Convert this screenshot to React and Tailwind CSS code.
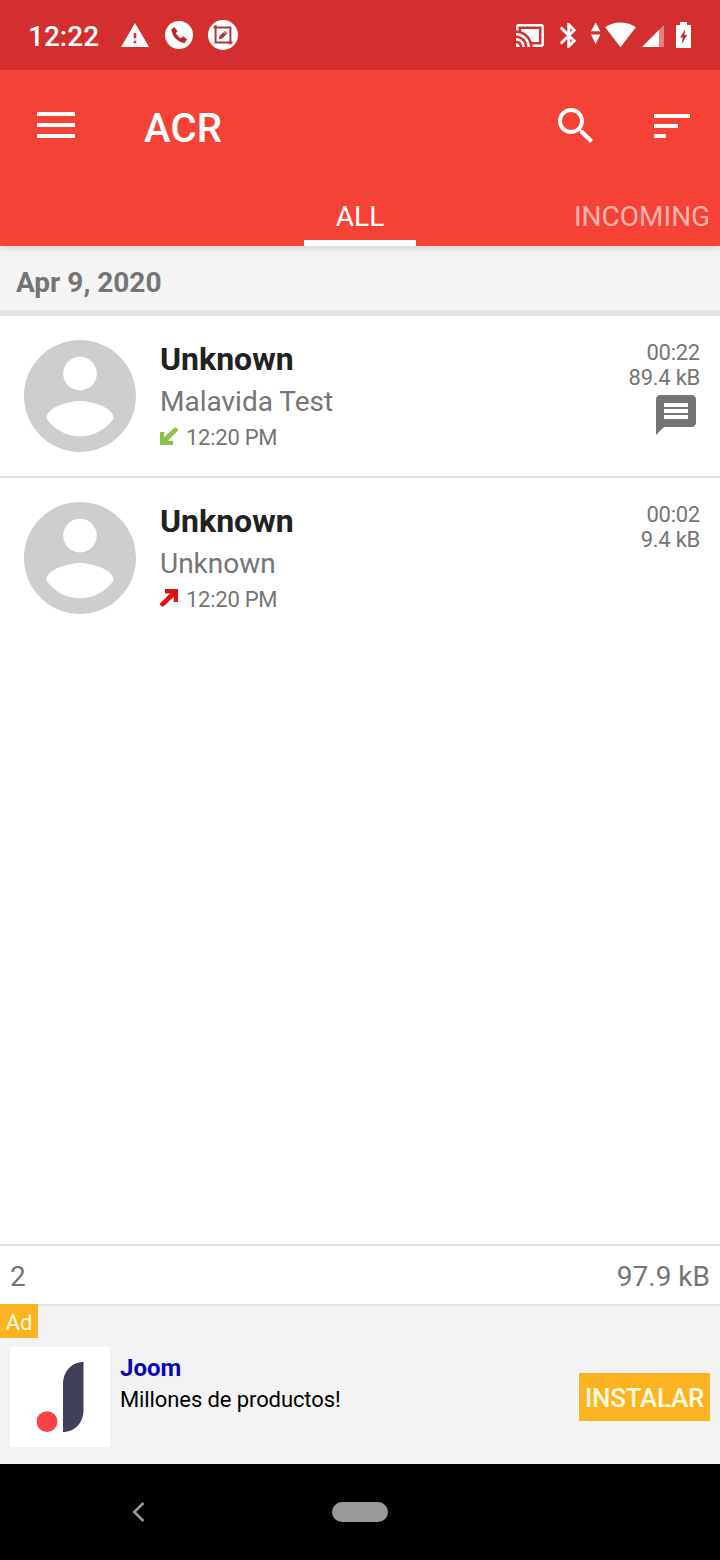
const CALLS = [
  {
    id: 1,
    name: 'Unknown',
    contact: 'Malavida Test',
    time: '12:20 PM',
    direction: 'in',
    duration: '00:22',
    size: '89.4 kB',
    hasNote: true,
  },
  {
    id: 2,
    name: 'Unknown',
    contact: 'Unknown',
    time: '12:20 PM',
    direction: 'out',
    duration: '00:02',
    size: '9.4 kB',
    hasNote: false,
  },
];

/**
 * System status bar: clock, notifications and connectivity icons.
 */
function StatusBar() {
  return (
    <div className="flex h-[70px] shrink-0 items-center bg-[#d32f2f] pl-7 pr-[29px] text-white">
      <span className="w-[93px] pt-1 text-[28px] font-medium leading-8">12:22</span>

      {/* Warning */}
      <svg className="h-6 w-7" viewBox="1 2 22 19" preserveAspectRatio="none" fill="currentColor">
        <path d="M1 21h22L12 2 1 21zm12-3h-2v-2h2v2zm0-4h-2v-4h2v4z" />
      </svg>

      {/* Call */}
      <svg className="ml-4 size-7" viewBox="0 0 28 28">
        <circle cx="14" cy="14" r="14" fill="#fff" />
        <path
          d="M8.300 7.800C8 13.500 13.500 20 20.300 20.300"
          fill="none"
          stroke="#b8282c"
          strokeWidth="3.400"
        />
        <path d="M6.200 9L9.200 6l3.400 4.300-2.700 2.600zM15.600 17.800l2.500-2.500 4.100 3.300-2.900 3.200z" fill="#b8282c" />
      </svg>

      {/* Screenshot edit */}
      <svg className="ml-[15px] size-[30px]" viewBox="0 0 30 30">
        <circle cx="15" cy="15" r="15" fill="#fff" />
        <path d="M5.500 7.600H22.400V24.500M7.600 5V22.400H24.500" fill="none" stroke="#a8383c" strokeWidth="2" />
        <path d="M10.800 19.200l.8-3.400 5.200-4.900 2.500 2.600-5.100 4.900z" fill="#a8383c" />
        <path d="M15.400 11.800l2.600 2.700" stroke="#fff" strokeWidth=".7" />
      </svg>

      <div className="flex-1" />

      {/* Cast */}
      <svg className="h-[23px] w-7" viewBox="1 3 22 18" preserveAspectRatio="none" fill="currentColor">
        <path d="M1 18v3h3c0-1.66-1.34-3-3-3zm0-4v2c2.76 0 5 2.24 5 5h2c0-3.87-3.13-7-7-7zm18-7H5v1.63c3.96 1.28 7.09 4.41 8.37 8.37H19V7zM1 10v2c4.97 0 9 4.03 9 9h2c0-6.08-4.93-11-11-11zm20-7H3c-1.1 0-2 .9-2 2v3h2V5h18v14h-7v2h7c1.1 0 2-.9 2-2V5c0-1.1-.9-2-2-2z" />
      </svg>

      {/* Bluetooth */}
      <svg
        className="ml-4 h-[25px] w-4"
        viewBox="5 2 12.71 20"
        fill="currentColor"
        stroke="currentColor"
        strokeWidth=".4"
      >
        <path d="M17.71 7.71L12 2h-1v7.59L6.41 5 5 6.41 10.59 12 5 17.59 6.41 19 11 14.41V22h1l5.71-5.71-4.3-4.29 4.3-4.29zM13 5.83l1.88 1.88L13 9.59V5.83zm1.88 10.46L13 18.17v-3.76l1.88 1.88z" />
      </svg>

      {/* Data activity + wifi */}
      <svg className="ml-[14px] h-[26px] w-[47px]" viewBox="590 22 47 26" fill="currentColor">
        <path d="M595.700 22.600l4.700 8.600h-9.400zM595.700 44l4.700-9.400h-9.400z" />
        <path d="M605.200 27.300C609.500 24 614.600 22.500 620.500 22.500S631.500 24 635.800 27.300L620.500 47.200z" />
      </svg>

      {/* Signal */}
      <svg className="ml-[5px] mt-0.5 h-[22px] w-[22px]" viewBox="0 0 22 22" fill="currentColor">
        <path d="M22 0v22H0z" opacity=".4" />
        <path d="M17 5v17H0z" />
      </svg>

      {/* Battery */}
      <svg className="ml-3 h-[26px] w-[15px]" viewBox="0 0 15 26" fill="currentColor">
        <path d="M4 0h7v3h3c.6 0 1 .4 1 1v21c0 .6-.4 1-1 1H1c-.6 0-1-.4-1-1V4c0-.6.4-1 1-1h3z" />
        <path d="M9.300 7L4.200 15.500h2.600L5.600 22.300l5.500-9.200H8.400z" fill="#c62a2c" />
      </svg>
    </div>
  );
}

/**
 * App bar with the toolbar actions and the tab strip.
 */
function AppBar() {
  return (
    <header className="relative z-10 h-44 shrink-0 bg-[#f44336] text-white shadow-[0_2px_6px_rgba(0,0,0,0.14)]">
      <div className="flex h-28 items-center pl-[37px] pr-6">
        <button aria-label="Menu">
          <svg className="block h-7 w-[38px]" viewBox="0 0 38 28" fill="currentColor">
            <path d="M0 0h38v4H0zM0 11h38v4H0zM0 22h38v4H0z" />
          </svg>
        </button>
        <h1 className="ml-[69px] flex-1 pt-[5px] text-[40px] font-medium leading-none tracking-[0.2px]">ACR</h1>
        <button aria-label="Search">
          <svg className="block size-12" viewBox="0 0 24 24" fill="currentColor">
            <path d="M15.5 14h-.79l-.28-.27C15.41 12.59 16 11.11 16 9.5 16 5.91 13.09 3 9.5 3S3 5.91 3 9.5 5.91 16 9.5 16c1.61 0 3.090-.59 4.230-1.570l.27.28v.79l5 4.990L20.490 19l-4.990-5zm-6 0C7.010 14 5 11.990 5 9.500S7.010 5 9.500 5 14 7.010 14 9.500 11.990 14 9.500 14z" />
          </svg>
        </button>
        <button aria-label="Sort" className="ml-12">
          <svg className="block size-12" viewBox="0 0 24 24" fill="currentColor">
            <path d="M3 6h18v2H3zM3 11h12v2H3zM3 16h6v2H3z" />
          </svg>
        </button>
      </div>

      <nav className="flex h-16 overflow-hidden pl-[304px] text-[28px] leading-[70px]">
        <span className="w-28 shrink-0 border-b-[6px] border-white text-center">ALL</span>
        <span className="ml-[158px] shrink-0 text-white/60">INCOMING</span>
      </nav>
    </header>
  );
}

function DirectionArrow({ direction }) {
  if (direction === 'in') {
    return (
      <svg className="-mt-0.5 size-[18px]" viewBox="0 0 18 18" fill="#8bc34a">
        <path d="M0 5h4.200v5.300L14.600.4h1.600L18 2.200v1.400L7.800 13.800H13V18H0z" />
      </svg>
    );
  }
  return (
    <svg className="-mt-0.5 size-[18px]" viewBox="0 0 18 18">
      <path d="M18 13h-4.200V7.700L3.400 17.600H1.800L0 15.800v-1.400L10.200 4.200H5V0h13z" fill="#ec0c0c" />
      <path d="M5 0h13v4.200H5z" fill="#cf1717" />
    </svg>
  );
}

function CallRow({ call }) {
  return (
    <li className="flex h-[162px] border-b-2 border-[#e2e2e2] pl-6 pr-5 pt-6 text-[#757575] last:border-transparent">
      <svg className="size-28 shrink-0" viewBox="2 2 20 20" fill="#cecece">
        <path d="M12 2C6.48 2 2 6.48 2 12s4.48 10 10 10 10-4.48 10-10S17.52 2 12 2zm0 3c1.66 0 3 1.34 3 3s-1.34 3-3 3-3-1.34-3-3 1.34-3 3-3zm0 14.2c-2.5 0-4.71-1.28-6-3.22.03-1.99 4-3.08 6-3.08 1.99 0 5.97 1.09 6 3.08-1.29 1.94-3.5 3.22-6 3.22z" />
      </svg>

      <div className="ml-6 flex-1">
        <p className="text-[32px] font-bold leading-[38px] text-[#212121]">{call.name}</p>
        <p className="mt-[5px] text-[28px] leading-[38px]">{call.contact}</p>
        <div className="mt-[3px] flex h-[26px] items-center gap-2">
          <DirectionArrow direction={call.direction} />
          <span className="pt-0.5 text-[22px] leading-6 tracking-[-0.25px]">{call.time}</span>
        </div>
      </div>

      <div className="flex flex-col items-end text-[22px] leading-[25px] tracking-[-0.25px]">
        <span>{call.duration}</span>
        <span>{call.size}</span>
        {call.hasNote && (
          <svg className="mr-1 mt-[5px] size-10" viewBox="2 2 20 20" fill="currentColor">
            <path d="M20 2H4c-1.1 0-1.99.9-1.99 2L2 22l4-4h14c1.1 0 2-.9 2-2V4c0-1.1-.9-2-2-2zm-2 12H6v-2h12v2zm0-3H6V9h12v2zm0-3H6V6h12v2z" />
          </svg>
        )}
      </div>
    </li>
  );
}

function AdBanner() {
  return (
    <aside className="relative flex h-[160px] shrink-0 items-start border-t-2 border-[#e2e2e2] bg-[#f3f3f3] pl-2.5 pr-2.5">
      <span className="absolute -top-0.5 left-0 flex h-[34px] w-[38px] items-center justify-center bg-[#fbb321] pt-0.5 text-[22px] tracking-[-0.25px] text-[#fffbe0]">
        Ad
      </span>
      <svg className="mt-[41px] size-[100px] shrink-0 bg-white" viewBox="0 0 100 100">
        <path d="M53 85V37C53 24 62 15 73.500 15V63C73.500 76 64.500 85 53 85z" fill="#404158" />
        <circle cx="37" cy="74.700" r="10.400" fill="#f84447" />
      </svg>
      <div className="ml-2.5 mt-[46px] flex-1">
        <p className="text-[24px] font-bold leading-8 text-[#0c06b4]">Joom</p>
        <p className="text-[22px] leading-8 tracking-[-0.1px] text-black">Millones de productos!</p>
      </div>
      <button className="mt-[67px] h-12 w-[131px] bg-[#fbb321] pt-0.5 text-[26px] font-medium tracking-[-0.3px] text-[#fffbe0]">
        INSTALAR
      </button>
    </aside>
  );
}

function NavigationBar() {
  return (
    <div className="flex h-24 shrink-0 items-center bg-black pl-[132px]">
      <svg className="h-5 w-[13px]" viewBox="0 0 13 20" fill="none" stroke="#999" strokeWidth="2.500">
        <path d="M11.500 1L2.200 10l9.300 9" />
      </svg>
      <div className="ml-[187px] h-5 w-14 rounded-full bg-[#999]" />
    </div>
  );
}

export default function App() {
  return (
    <div className="flex h-[1560px] w-[720px] flex-col overflow-hidden bg-white font-[Roboto,sans-serif]">
      <StatusBar />
      <AppBar />

      {/* Recordings grouped by day */}
      <main className="flex-1">
        <h2 className="h-[70px] border-b-[6px] border-[#e4e4e4] bg-[#f4f4f4] pl-4 text-[28px] font-bold leading-[73px] text-[#757575]">
          Apr 9, 2020
        </h2>
        <ul>
          {CALLS.map((call) => (
            <CallRow key={call.id} call={call} />
          ))}
        </ul>
      </main>

      {/* Totals */}
      <div className="flex h-[60px] shrink-0 items-center justify-between border-t-2 border-[#e2e2e2] px-2.5 pt-1 text-[28px] text-[#757575]">
        <span>2</span>
        <span>97.9 kB</span>
      </div>

      <AdBanner />
      <NavigationBar />
    </div>
  );
}
